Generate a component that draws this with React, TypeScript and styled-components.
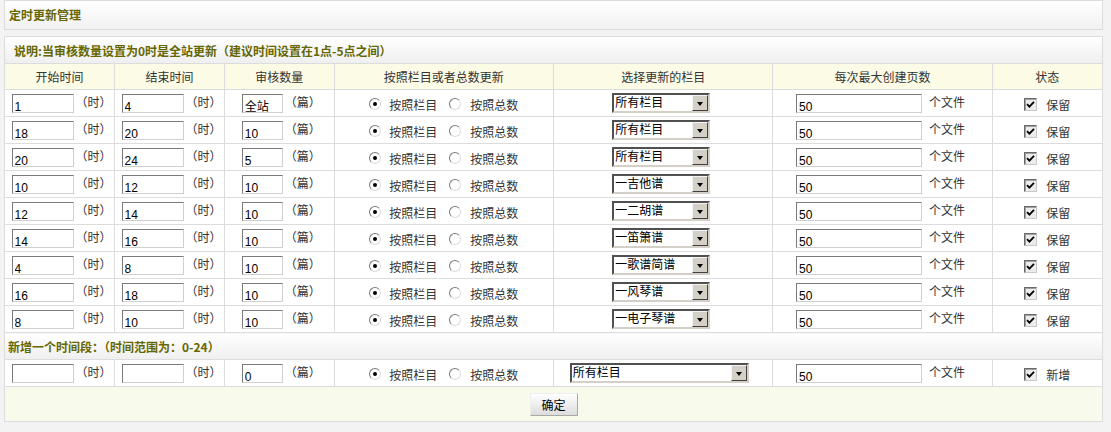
import React from 'react';
import styled, { createGlobalStyle } from 'styled-components';

const Global = createGlobalStyle`
  html, body { margin: 0; padding: 0; background: #f3f3f3; }
  body {
    font-family: "Noto Sans CJK SC", "Liberation Sans", sans-serif;
    font-size: 12px;
    color: #333;
  }
`;

const Page = styled.div`
  margin: 0 8px 0 4px;
`;

const TitleBar = styled.div`
  box-sizing: border-box;
  height: 30px;
  border: 1px solid #dcdcdc;
  background: linear-gradient(#ffffff, #f1f1f1);
  display: flex;
  align-items: center;
  padding: 0 0 2px 4px;
  font-weight: bold;
  color: #666600;
`;

const Panel = styled.div`
  margin-top: 6px;
  border: 1px solid #dcdcdc;
  background: #fff;
`;

const Table = styled.table`
  width: 100%;
  border-collapse: collapse;
  table-layout: fixed;
`;

const NoteCell = styled.td<{ $indent: number }>`
  height: 26px;
  padding: 0 0 0 ${p => p.$indent}px;
  background: linear-gradient(#ffffff, #efefef);
  border-bottom: 1px solid #dcdcdc;
  font-weight: bold;
  color: #666600;
`;

const Th = styled.th`
  height: 25px;
  padding: 0;
  font-weight: normal;
  background: #fbfbe6;
  border: 1px solid #dcdcdc;
  border-top: none;
  text-align: center;
  color: #333;
  &:first-child { border-left: none; }
  &:last-child { border-right: none; }
`;

const Td = styled.td<{ $shift?: number }>`
  height: 26px;
  padding: 0 ${p => (p.$shift && p.$shift < 0 ? -p.$shift : 0)}px 0
    ${p => (p.$shift && p.$shift > 0 ? p.$shift : 0)}px;
  border: 1px solid #dcdcdc;
  text-align: center;
  white-space: nowrap;
  &:first-child { border-left: none; }
  &:last-child { border-right: none; }
`;

const ActionCell = styled.td`
  height: 34px;
  padding: 0;
  background: #f8faec;
  text-align: center;
`;

const TextInput = styled.input<{ $w: number }>`
  box-sizing: border-box;
  width: ${p => p.$w}px;
  height: 19px;
  margin: 0;
  padding: 6px 2px 0;
  border: 1px solid;
  border-color: #7a7a7a #cfcfcf #cfcfcf #7a7a7a;
  background: #fff;
  font-family: "Liberation Sans", "Noto Sans CJK SC", sans-serif;
  font-size: 12px;
  line-height: 12px;
  color: #000;
  vertical-align: middle;
  outline: none;
`;

const CjkInput = styled(TextInput)`
  font-family: "Noto Sans CJK SC", sans-serif;
  padding-top: 4px;
`;

const Unit = styled.span<{ $gap: number }>`
  display: inline-block;
  margin-left: ${p => p.$gap}px;
  vertical-align: middle;
  position: relative;
  top: -2px;
`;

const Choice = styled.span`
  display: inline-flex;
  align-items: center;
  vertical-align: middle;
`;

const RadioMark = styled.span<{ $on: boolean }>`
  box-sizing: border-box;
  width: 12px;
  height: 12px;
  border-radius: 50%;
  border: 1px solid;
  border-color: #7a7a7a #dcdcdc #dcdcdc #7a7a7a;
  background: #fff;
  display: inline-flex;
  align-items: center;
  justify-content: center;
  &::after {
    content: "";
    width: 4px;
    height: 4px;
    border-radius: 50%;
    background: ${p => (p.$on ? '#000' : 'transparent')};
  }
`;

const ChoiceText = styled.span<{ $left: number; $right: number }>`
  margin-left: ${p => p.$left}px;
  margin-right: ${p => p.$right}px;
`;

const SelectBox = styled.span<{ $w: number }>`
  box-sizing: border-box;
  display: inline-flex;
  align-items: center;
  justify-content: space-between;
  width: ${p => p.$w}px;
  height: 20px;
  border: 2px solid;
  border-color: #505050 #d4d0c8 #d4d0c8 #505050;
  background: #fff;
  vertical-align: middle;
  padding: 0 0 0 1px;
  color: #000;
  text-align: left;
`;

const SelectText = styled.span`
  line-height: 14px;
  position: relative;
  top: -1px;
`;

const SelectButton = styled.span`
  box-sizing: border-box;
  width: 16px;
  height: 16px;
  background: #d4d0c8;
  border: 1px solid;
  border-color: #f4f4f4 #404040 #404040 #f4f4f4;
  display: inline-flex;
  align-items: center;
  justify-content: center;
  &::after {
    content: "";
    width: 0;
    height: 0;
    border-left: 3.5px solid transparent;
    border-right: 3.5px solid transparent;
    border-top: 4px solid #000;
    margin-top: 1px;
  }
`;

const CheckMark = styled.span`
  box-sizing: border-box;
  width: 13px;
  height: 13px;
  border: 1px solid;
  border-color: #6a6a6a #c8c8c8 #c8c8c8 #6a6a6a;
  box-shadow: inset 1px 1px 0 #a0a0a0;
  background: #ececec;
  display: inline-flex;
  align-items: center;
  justify-content: center;
`;

const CheckText = styled.span`
  margin-left: 9px;
`;

const Button = styled.button`
  box-sizing: border-box;
  width: 48px;
  height: 23px;
  margin: 0;
  padding: 0;
  border: 1px solid;
  border-color: #eeeeee #a8a8a8 #a8a8a8 #eeeeee;
  background: linear-gradient(#ffffff, #dcdcdc);
  font-family: "Noto Sans CJK SC", sans-serif;
  font-size: 12px;
  color: #000;
  vertical-align: middle;
`;

type Row = { s: string; e: string; n: string; cat: string };

const rows: Row[] = [
  { s: '1', e: '4', n: '全站', cat: '所有栏目' },
  { s: '18', e: '20', n: '10', cat: '所有栏目' },
  { s: '20', e: '24', n: '5', cat: '所有栏目' },
  { s: '10', e: '12', n: '10', cat: '一吉他谱' },
  { s: '12', e: '14', n: '10', cat: '一二胡谱' },
  { s: '14', e: '16', n: '10', cat: '一笛箫谱' },
  { s: '4', e: '8', n: '10', cat: '一歌谱简谱' },
  { s: '16', e: '18', n: '10', cat: '一风琴谱' },
  { s: '8', e: '10', n: '10', cat: '一电子琴谱' },
];

const Tick = () => (
  <svg width="9" height="9" viewBox="0 0 9 9">
    <path d="M1 4.2 L3.4 6.6 L8 1.8" stroke="#000" strokeWidth="1.8" fill="none" />
  </svg>
);

const Mode = () => (
  <Choice>
    <RadioMark $on />
    <ChoiceText $left={8} $right={12}>按照栏目</ChoiceText>
    <RadioMark $on={false} />
    <ChoiceText $left={9} $right={0}>按照总数</ChoiceText>
  </Choice>
);

const Select = ({ w, text }: { w: number; text: string }) => (
  <SelectBox $w={w}>
    <SelectText>{text}</SelectText>
    <SelectButton />
  </SelectBox>
);

const Keep = ({ label }: { label: string }) => (
  <Choice>
    <CheckMark>
      <Tick />
    </CheckMark>
    <CheckText>{label}</CheckText>
  </Choice>
);

const Count = ({ v }: { v: string }) =>
  /^\d*$/.test(v) ? (
    <TextInput $w={41} defaultValue={v} readOnly />
  ) : (
    <CjkInput $w={41} defaultValue={v} readOnly />
  );

const Cells = ({ r, wide, label }: { r: Row; wide: boolean; label: string }) => (
  <>
    <Td $shift={4}>
      <TextInput $w={62} defaultValue={r.s} readOnly />
      <Unit $gap={2}>（时）</Unit>
    </Td>
    <Td $shift={4}>
      <TextInput $w={62} defaultValue={r.e} readOnly />
      <Unit $gap={2}>（时）</Unit>
    </Td>
    <Td $shift={4}>
      <Count v={r.n} />
      <Unit $gap={2}>（篇）</Unit>
    </Td>
    <Td>
      <Mode />
    </Td>
    <Td $shift={wide ? 0 : 4}>
      <Select w={wide ? 179 : 98} text={r.cat} />
      <Unit $gap={8}> </Unit>
    </Td>
    <Td $shift={-4}>
      <TextInput $w={126} defaultValue="50" readOnly />
      <Unit $gap={7}>个文件</Unit>
    </Td>
    <Td>
      <Keep label={label} />
    </Td>
  </>
);

export default function App() {
  return (
    <>
      <Global />
      <Page>
        <TitleBar>定时更新管理</TitleBar>
        <Panel>
          <Table>
            <colgroup>
              <col style={{ width: '10%' }} />
              <col style={{ width: '10%' }} />
              <col style={{ width: '10%' }} />
              <col style={{ width: '20%' }} />
              <col style={{ width: '20%' }} />
              <col style={{ width: '20%' }} />
              <col style={{ width: '10%' }} />
            </colgroup>
            <tbody>
              <tr>
                <NoteCell colSpan={7} $indent={9}>
                  说明:当审核数量设置为0时是全站更新（建议时间设置在1点-5点之间）
                </NoteCell>
              </tr>
              <tr>
                <Th>开始时间</Th>
                <Th>结束时间</Th>
                <Th>审核数量</Th>
                <Th>按照栏目或者总数更新</Th>
                <Th>选择更新的栏目</Th>
                <Th>每次最大创建页数</Th>
                <Th>状态</Th>
              </tr>
              {rows.map((r, i) => (
                <tr key={i}>
                  <Cells r={r} wide={false} label="保留" />
                </tr>
              ))}
              <tr>
                <NoteCell colSpan={7} $indent={3}>
                  新增一个时间段：（时间范围为：0-24）
                </NoteCell>
              </tr>
              <tr>
                <Cells r={{ s: '', e: '', n: '0', cat: '所有栏目' }} wide label="新增" />
              </tr>
              <tr>
                <ActionCell colSpan={7}>
                  <Button type="button">确定</Button>
                </ActionCell>
              </tr>
            </tbody>
          </Table>
        </Panel>
      </Page>
    </>
  );
}
